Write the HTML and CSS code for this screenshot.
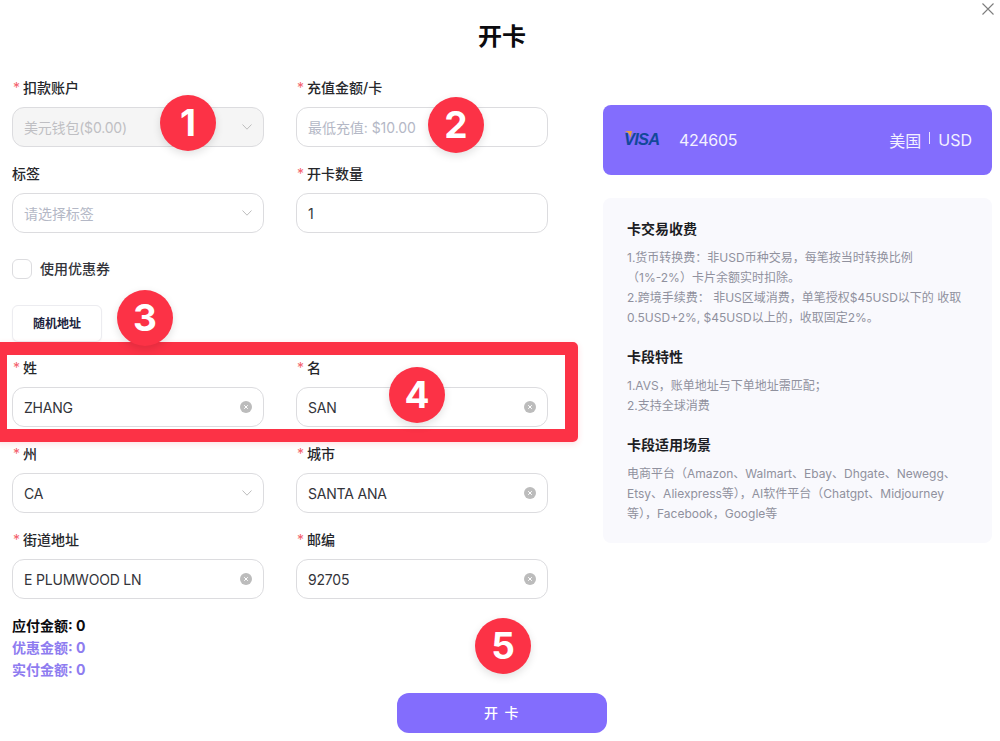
FILE: index.html
```html
<!DOCTYPE html>
<html lang="zh-CN">
<head>
<meta charset="utf-8">
<title>开卡</title>
<link rel="stylesheet" href="styles.css">
</head>
<body>
<main class="dialog">
  <button class="close" aria-label="关闭"><svg width="12" height="12" viewBox="0 0 12 12"><path d="M.5.5l11 11M11.500.5l-11 11" fill="none" stroke="#7d7d7d" stroke-width="1.100"/></svg></button>
  <h1 class="title">开卡</h1>
  <div class="columns">
    <form class="form">
      <div class="grid">
        <div class="field"><label class="label"><i>*</i>扣款账户</label>
          <div class="box disabled"><input disabled value="美元钱包($0.00)"><svg class="chev" width="10" height="6" viewBox="0 0 10 6"><path d="M.5.5L5 5.200 9.500.5" fill="none" stroke="#bdbdbd"/></svg></div></div>
        <div class="field"><label class="label"><i>*</i>充值金额/卡</label>
          <div class="box"><input placeholder="最低充值: $10.00"></div></div>
        <div class="field"><label class="label">标签</label>
          <div class="box"><input placeholder="请选择标签"><svg class="chev" width="10" height="6" viewBox="0 0 10 6"><path d="M.5.5L5 5.200 9.500.5" fill="none" stroke="#bdbdbd"/></svg></div></div>
        <div class="field"><label class="label"><i>*</i>开卡数量</label>
          <div class="box"><input value="1"></div></div>
      </div>
      <label class="check"><span class="tick"></span>使用优惠券</label>
      <button type="button" class="random">随机地址</button>
      <div class="grid">
        <div class="field"><label class="label"><i>*</i>姓</label>
          <div class="box"><input value="ZHANG"><svg class="clear" width="12" height="12" viewBox="0 0 12 12"><circle cx="6" cy="6" r="6" fill="#bcbcbc"/><path d="M4.200 4.200l3.600 3.600M7.800 4.200l-3.600 3.600" stroke="#fff"/></svg></div></div>
        <div class="field"><label class="label"><i>*</i>名</label>
          <div class="box"><input value="SAN"><svg class="clear" width="12" height="12" viewBox="0 0 12 12"><circle cx="6" cy="6" r="6" fill="#bcbcbc"/><path d="M4.200 4.200l3.600 3.600M7.800 4.200l-3.600 3.600" stroke="#fff"/></svg></div></div>
        <div class="field"><label class="label"><i>*</i>州</label>
          <div class="box"><input value="CA"><svg class="chev" width="10" height="6" viewBox="0 0 10 6"><path d="M.5.5L5 5.200 9.500.5" fill="none" stroke="#bdbdbd"/></svg></div></div>
        <div class="field"><label class="label"><i>*</i>城市</label>
          <div class="box"><input value="SANTA ANA"><svg class="clear" width="12" height="12" viewBox="0 0 12 12"><circle cx="6" cy="6" r="6" fill="#bcbcbc"/><path d="M4.200 4.200l3.600 3.600M7.800 4.200l-3.600 3.600" stroke="#fff"/></svg></div></div>
        <div class="field"><label class="label"><i>*</i>街道地址</label>
          <div class="box"><input value="E PLUMWOOD LN"><svg class="clear" width="12" height="12" viewBox="0 0 12 12"><circle cx="6" cy="6" r="6" fill="#bcbcbc"/><path d="M4.200 4.200l3.600 3.600M7.800 4.200l-3.600 3.600" stroke="#fff"/></svg></div></div>
        <div class="field"><label class="label"><i>*</i>邮编</label>
          <div class="box"><input value="92705"><svg class="clear" width="12" height="12" viewBox="0 0 12 12"><circle cx="6" cy="6" r="6" fill="#bcbcbc"/><path d="M4.200 4.200l3.600 3.600M7.800 4.200l-3.600 3.600" stroke="#fff"/></svg></div></div>
      </div>
      <div class="sums">
        <p>应付金额: 0</p>
        <p class="accent">优惠金额: 0</p>
        <p class="accent">实付金额: 0</p>
      </div>
    </form>
    <aside class="aside">
      <div class="card">
        <span class="visa"><svg class="swoosh" width="8" height="7" viewBox="0 0 8 7"><path d="M0 0c3 .2 5 1.800 6.500 6.500L8 0z" fill="#e9a13b"/></svg><span>VISA</span></span>
        <span class="bin">424605</span>
        <span class="region">美国<b></b>USD</span>
      </div>
      <div class="panel">
        <h2>卡交易收费</h2>
        <p>1.货币转换费：非USD币种交易，每笔按当时转换比例（1%-2%）卡片余额实时扣除。<br>2.跨境手续费： 非US区域消费，单笔授权$45USD以下的 收取0.5USD+2%, $45USD以上的，收取固定2%。</p>
        <h2>卡段特性</h2>
        <p>1.AVS，账单地址与下单地址需匹配；<br>2.支持全球消费</p>
        <h2>卡段适用场景</h2>
        <p>电商平台（Amazon、Walmart、Ebay、Dhgate、Newegg、Etsy、Aliexpress等），AI软件平台（Chatgpt、Midjourney等），Facebook，Google等</p>
      </div>
    </aside>
  </div>
  <div class="footer"><button type="button" class="submit">开 卡</button></div>
</main>
<div class="frame"></div>
<span class="badge b1">1</span>
<span class="badge b2">2</span>
<span class="badge b3">3</span>
<span class="badge b4">4</span>
<span class="badge b5">5</span>
</body>
</html>
```
FILE: styles.css
```css
* { box-sizing: border-box; }
html, body { margin: 0; height: 741px; overflow: hidden; background: #fff; }
body { font-family: Inter, "Noto Sans CJK SC", sans-serif; font-size: 14px; color: #26272b; position: relative; }
.dialog { width: 1000px; padding: 0 8px 0 12px; }
.close { position: absolute; left: 982px; top: 3px; width: 12px; height: 12px; padding: 0; border: 0; background: none; display: block; }
.close svg { display: block; }
.title { margin: 0; height: 78px; padding-top: 21px; font-size: 24px; line-height: 32px; font-weight: 700; color: #0b0b0f; text-align: center; }
.columns { display: flex; gap: 55px; height: 615px; }
.form { width: 536px; }
.grid { display: grid; grid-template-columns: 252px 252px; column-gap: 32px; row-gap: 17px; }
.label { display: block; height: 20px; line-height: 20px; font-weight: 500; margin-bottom: 9px; color: #26272b; }
.label i { font-style: normal; color: #f4606c; margin: 0 3px 0 1px; font-weight: 400; }
.box { height: 40px; border: 1px solid #dcdcdf; border-radius: 12px; display: flex; align-items: center; padding: 0 11px; background: #fff; }
.box input { flex: 1; min-width: 0; border: 0; outline: 0; padding: 0; background: none; font: inherit; color: #33343a; letter-spacing: -.2px; }
.box input::placeholder { color: #b4b8c6; opacity: 1; letter-spacing: -.05px; }
.box.disabled { background: #f5f5f5; }
.box.disabled input { color: #bfbfc3; }
.chev { flex: none; }
.clear { flex: none; }
.check { display: flex; align-items: flex-start; gap: 8px; height: 20px; margin-top: 26px; font-weight: 500; line-height: 19px; color: #33343a; }
.tick { width: 20px; height: 20px; border: 1px solid #dcdcdf; border-radius: 6px; background: #fff; }
.random { display: block; width: 90px; height: 37px; margin: 26px 0 16px; padding: 0; border: 1px solid #ececf0; border-radius: 6px; background: #fff; font: 600 12px/1 Inter, "Noto Sans CJK SC", sans-serif; color: #1d2440; box-shadow: 0 1px 2px rgba(0,0,0,.04); }
.sums { margin-top: 16px; font-weight: 700; line-height: 22px; color: #0b0b0f; }
.sums p { margin: 0; }
.sums .accent { color: #8e7cf0; }
.aside { width: 389px; padding-top: 27px; }
.card { height: 70px; border-radius: 8px; background: #836dfd; color: #fff; display: flex; align-items: center; padding: 0 20px 0 21px; font-size: 16px; }
.visa { position: relative; width: 35px; margin-right: 20px; font: italic 700 16.500px/1 "Liberation Sans", sans-serif; color: #12489a; letter-spacing: -.8px; top: -1px; }
.swoosh { position: absolute; left: 0; top: 0; }
.bin { font-weight: 400; color: #f3f1ff; letter-spacing: -.3px; }
.region { margin-left: auto; display: flex; align-items: center; color: #f3f1ff; }
.region b { width: 1px; height: 12px; background: #e9e5ff; margin: -4px 8px 0; }
.panel { margin-top: 23px; height: 345px; padding: 21px 24px 20px; border-radius: 8px; background: #f9f9fd; }
.panel h2 { margin: 0 0 9px; font-size: 14px; line-height: 20px; font-weight: 600; color: #1d1e24; }
.panel p { margin: 0 0 19px; font-size: 12px; line-height: 20px; color: #90919e; }
.footer { display: flex; justify-content: center; }
.submit { width: 210px; height: 40px; border: 0; border-radius: 12px; background: #836dfd; color: #fff; font: 500 14px/1 Inter, "Noto Sans CJK SC", sans-serif; letter-spacing: 1.500px; }
.frame { position: absolute; left: -6px; top: 342px; width: 584px; height: 100px; border: 13.500px solid #fc3246; border-radius: 5px; box-shadow: 0 2px 6px rgba(252,50,70,.15); }
.badge { position: absolute; width: 56px; height: 56px; margin: -28px 0 0 -28px; border-radius: 50%; background: #fc3246; color: #fff; font: 700 37px/56px Inter, sans-serif; text-align: center; box-shadow: 0 3px 8px rgba(0,0,0,.12); }
.b1 { left: 188px; top: 123px; }
.b2 { left: 456px; top: 125px; }
.b3 { left: 145px; top: 318px; }
.b4 { left: 417px; top: 395px; }
.b5 { left: 503px; top: 646px; }
```
